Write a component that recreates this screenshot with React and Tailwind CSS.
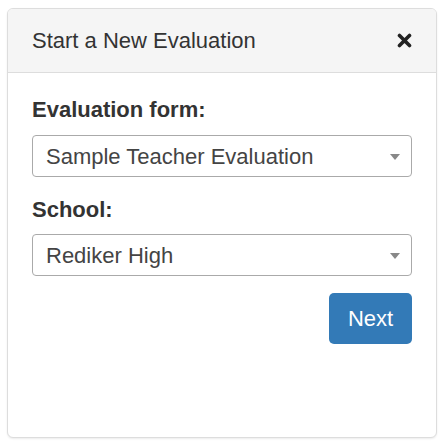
import React from "react";

function Select({ value }) {
  return (
    <div className="relative flex h-[42px] items-center rounded-[4px] border border-[#aaaaaa] bg-white pl-[13px] pt-[2px] text-[22px] text-[#444444]">
      <span className="leading-none">{value}</span>
      <span className="absolute right-[11px] top-[18px] h-0 w-0 border-x-[5px] border-t-[6px] border-x-transparent border-t-[#888888]" />
    </div>
  );
}

export default function App() {
  return (
    <div className="h-[447px] w-[447px] bg-white pl-[7px] pt-[8px] font-['Liberation_Sans',Arial,sans-serif] text-[#333333]">
      <div className="flex h-[430px] w-[430px] flex-col overflow-hidden rounded-[6px] border border-[#dddddd] bg-white shadow-[0_1px_2px_rgba(0,0,0,0.08)]">
        <div className="flex h-[64px] items-center justify-between border-b border-[#dddddd] bg-[#f5f5f5] pl-[24px] pr-[24px]">
          <span className="text-[22px] leading-none">Start a New Evaluation</span>
          <svg width="15" height="15" viewBox="0 0 15 15">
            <path d="M2.5 2.5 L12.5 12.5 M12.5 2.5 L2.5 12.5" stroke="#222222" strokeWidth="3.6" strokeLinecap="round" />
          </svg>
        </div>
        <div className="flex flex-col px-[24px] pt-[25px]">
          <label className="mb-[13px] text-[22px] font-bold leading-[24px]">Evaluation form:</label>
          <Select value="Sample Teacher Evaluation" />
          <label className="mb-[12px] mt-[21px] text-[22px] font-bold leading-[24px]">School:</label>
          <Select value="Rediker High" />
          <div className="mt-[17px] flex justify-end">
            <button className="h-[51px] w-[83px] rounded-[5px] bg-[#337ab7] text-[22px] text-white">Next</button>
          </div>
        </div>
      </div>
    </div>
  );
}
